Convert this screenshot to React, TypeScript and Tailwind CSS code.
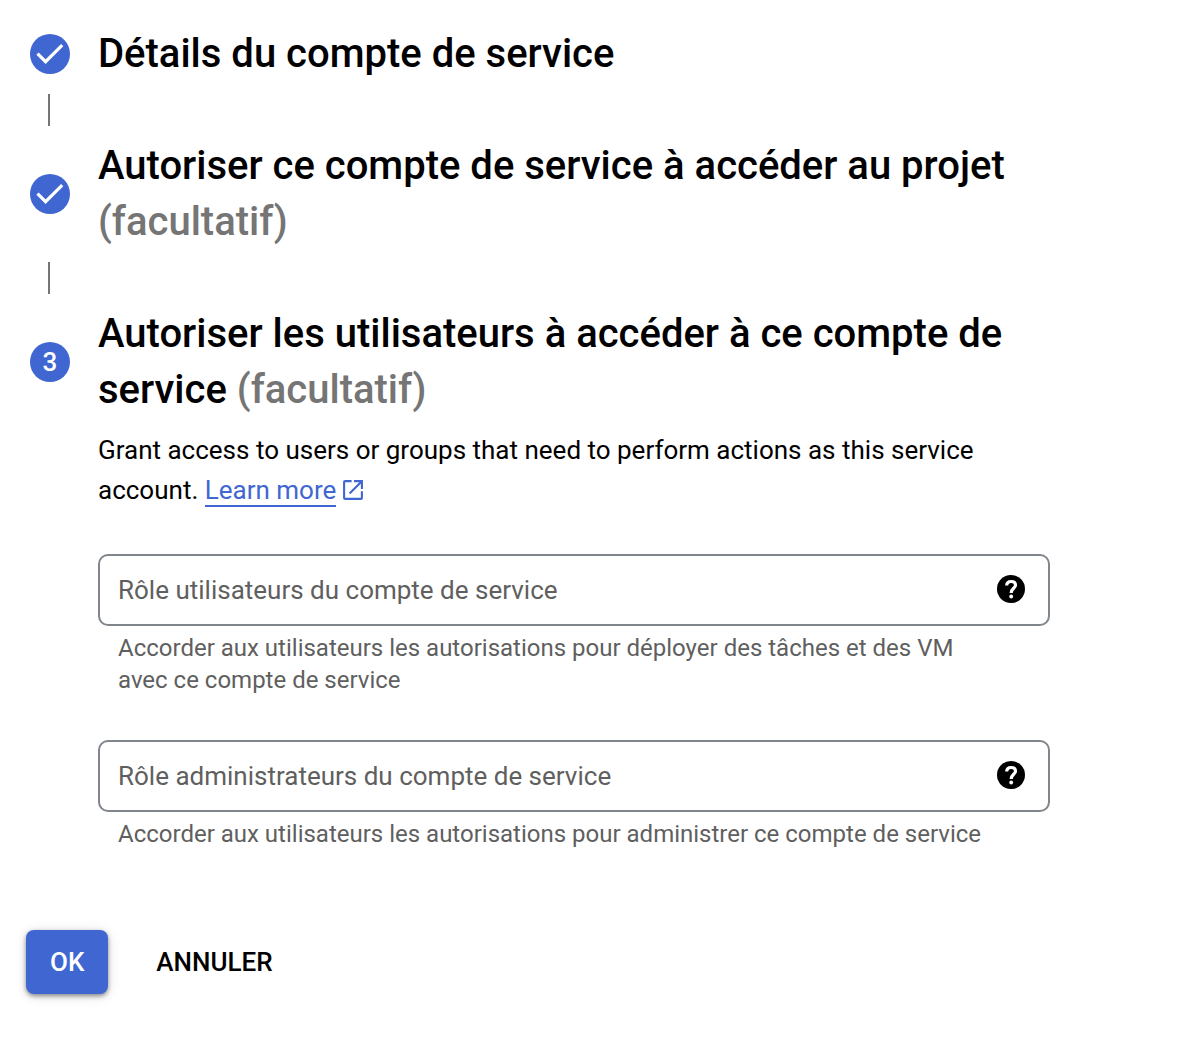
import type { ReactNode } from "react";

function Check() {
  return (
    <svg className="block size-10" viewBox="0 0 40 40" aria-hidden="true">
      <circle cx="20" cy="20" r="20" fill="#4067d1" />
      <path d="M7.5 19.6L15.6 27.7L32.2 11.1" fill="none" stroke="#fff" strokeWidth="3.2" />
    </svg>
  );
}

function Title({ children }: { children: ReactNode }) {
  return <h2 className="text-[40px] leading-14 font-medium">{children}</h2>;
}

function Optional() {
  return <span className="text-[#757575]">(facultatif)</span>;
}

function Connector() {
  return <div className="my-3 ml-[18px] h-8 w-0.5 bg-[#757575]" />;
}

function Step({ marker, children }: { marker: ReactNode; children: ReactNode }) {
  return (
    <div className="flex items-center gap-7">
      <div className="shrink-0">{marker}</div>
      {children}
    </div>
  );
}

function HelpIcon() {
  return (
    <svg className="block size-7" viewBox="0 0 28 28" aria-hidden="true">
      <circle cx="14" cy="14" r="14" fill="#000" />
      <path
        d="M9.7 10.6C9.7 8 11.5 6.5 14.1 6.5C16.9 6.5 18.5 8 18.5 10.2C18.5 13.3 14.2 13.5 14.2 17.9"
        fill="none"
        stroke="#fff"
        strokeWidth="3.2"
      />
      <circle cx="14.2" cy="21.5" r="1.9" fill="#fff" />
    </svg>
  );
}

function ExternalIcon() {
  return (
    <svg
      className="ml-[7px] inline-block size-5 align-[-1px]"
      viewBox="0 0 20 20"
      fill="none"
      stroke="currentColor"
      strokeWidth="2.1"
      aria-hidden="true"
    >
      <path
        d="M8.6 1.1H2.1Q1.1 1.1 1.1 2.1V17.9Q1.1 18.9 2.1 18.9H17.9Q18.9 18.9 18.9 17.9V11.2"
      />
      <path d="M11 1.1H18.9V9M18.6 1.4L6.6 13.4" />
    </svg>
  );
}

function Field({ id, label, hint }: { id: string; label: string; hint: string }) {
  return (
    <div>
      <div className="flex h-18 items-center rounded-[10px] border-2 border-[#80868b] pr-[23px] pl-[18px]">
        <input
          id={id}
          aria-label={label}
          aria-describedby={`${id}-hint`}
          placeholder={label}
          className="min-w-0 flex-1 text-[26px] leading-10 outline-none placeholder:text-[#5f5f5f]"
        />
        <button type="button" aria-label="Aide" className="pb-0.5">
          <HelpIcon />
        </button>
      </div>
      <p id={`${id}-hint`} className="mt-1.5 pr-16 pl-5 text-2xl leading-8 text-[#5f5f5f]">
        {hint}
      </p>
    </div>
  );
}

export default function App() {
  return (
    <main className="min-h-screen bg-white pt-[26px] pr-32 pb-11 pl-[26px] font-[Roboto,sans-serif] text-black">
      <div className="pl-1">
        <Step marker={<Check />}>
          <Title>Détails du compte de service</Title>
        </Step>
        <Connector />
        <Step marker={<Check />}>
          <Title>
            Autoriser ce compte de service à accéder au projet <Optional />
          </Title>
        </Step>
        <Connector />
        <Step
          marker={
            <div className="flex size-10 items-center justify-center rounded-full bg-[#4067d1] text-[26px] font-medium text-white">
              3
            </div>
          }
        >
          <Title>
            Autoriser les utilisateurs à accéder à ce compte de service <Optional />
          </Title>
        </Step>
      </div>
      <section className="pl-18">
        <p className="mt-3 text-[26px] leading-10">
          Grant access to users or groups that need to perform actions as this service account.{" "}
          <a href="#learn-more" className="text-[#4067d1]">
            <span className="border-b-2 border-[#4067d1]">Learn more</span>
            <ExternalIcon />
          </a>
        </p>
        <form className="mt-11 flex flex-col gap-11">
          <Field
            id="users"
            label="Rôle utilisateurs du compte de service"
            hint="Accorder aux utilisateurs les autorisations pour déployer des tâches et des VM avec ce compte de service"
          />
          <Field
            id="admins"
            label="Rôle administrateurs du compte de service"
            hint="Accorder aux utilisateurs les autorisations pour administrer ce compte de service"
          />
        </form>
      </section>
      <div className="mt-20 flex gap-6 text-[26px] font-medium">
        <button
          type="button"
          className="h-16 rounded-lg bg-[#4067d1] px-6 text-white shadow-[0_2px_4px_rgba(0,0,0,0.4),0_2px_12px_rgba(0,0,0,0.15)]"
        >
          OK
        </button>
        <button type="button" className="h-16 px-6">
          ANNULER
        </button>
      </div>
    </main>
  );
}
